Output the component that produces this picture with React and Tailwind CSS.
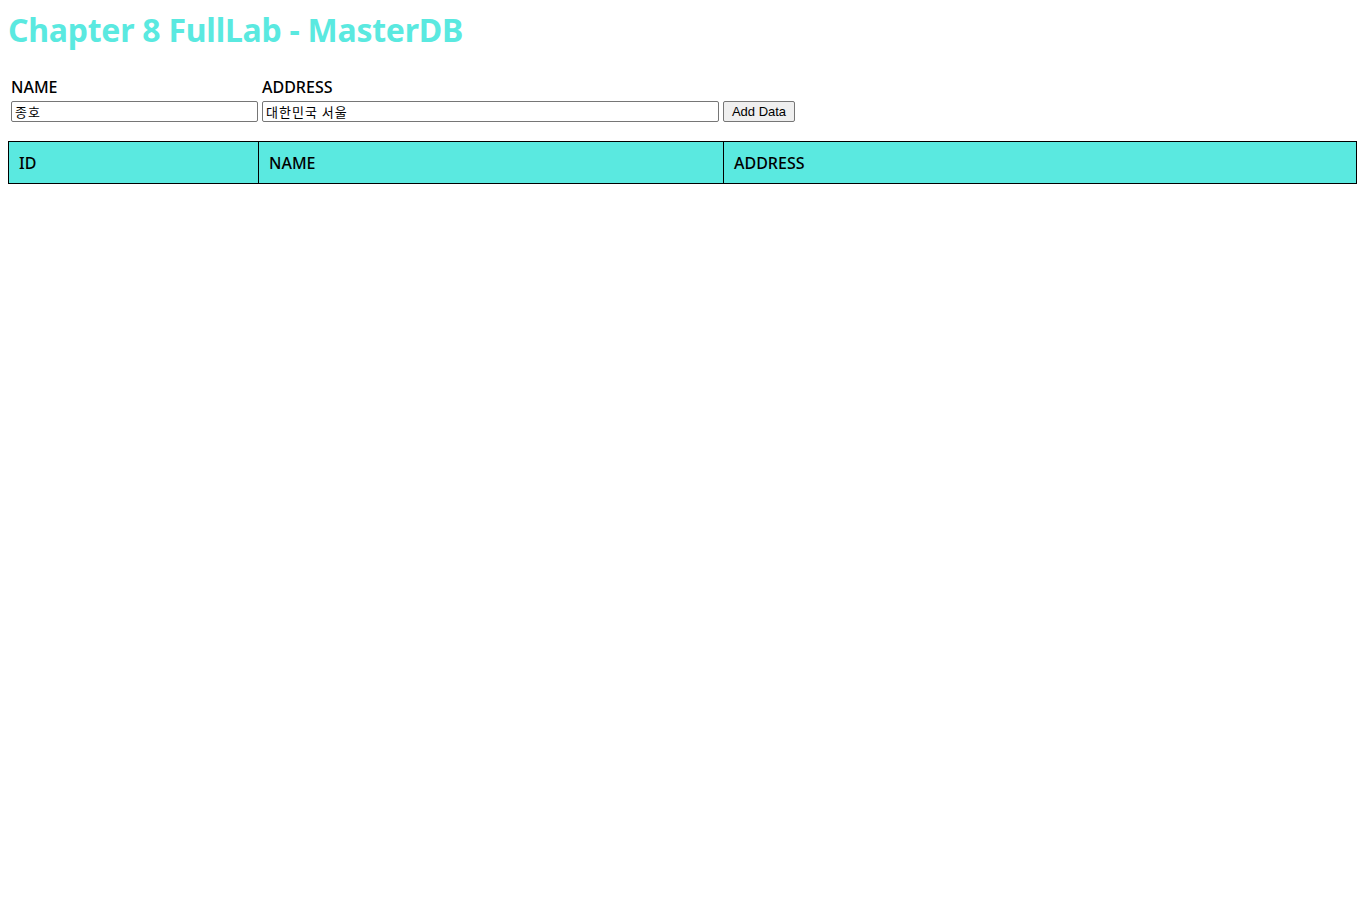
import { useState } from 'react';

const App = () => {
  const [name, setName] = useState('종호');
  const [address, setAddress] = useState('대한민국 서울');
  const [rows, setRows] = useState([]);

  const addData = () => {
    setRows([...rows, { id: rows.length + 1, name, address }]);
  };

  return (
    <div className="min-h-screen bg-white px-2 pt-[9px] font-['Noto_Sans','Noto_Sans_CJK_KR',sans-serif] text-black">
      {/* Title */}
      <h1 className="text-[32px] leading-[42px] font-bold tracking-[-0.25px] text-[#5ae9e0]">
        Chapter 8 FullLab - MasterDB
      </h1>

      {/* Form */}
      <div className="mt-[25px] ml-[3px] flex items-end gap-1">
        <div className="flex w-[247px] flex-col">
          <label className="text-[16px] leading-[22px] font-medium">NAME</label>
          <input
            value={name}
            onChange={(e) => setName(e.target.value)}
            className="mt-[3px] h-[21px] border border-[#767676] rounded-[2px] px-[3px] text-[13px] tracking-[1px] font-['Noto_Sans_CJK_KR',sans-serif] outline-none"
          />
        </div>
        <div className="flex w-[457px] flex-col">
          <label className="text-[16px] leading-[22px] font-medium">ADDRESS</label>
          <input
            value={address}
            onChange={(e) => setAddress(e.target.value)}
            className="mt-[3px] h-[21px] border border-[#767676] rounded-[2px] px-[3px] text-[13px] tracking-[1px] font-['Noto_Sans_CJK_KR',sans-serif] outline-none"
          />
        </div>
        <button
          onClick={addData}
          className="h-[21px] w-[72px] border border-[#767676] rounded-[2px] bg-[#efefef] text-[13px] leading-[19px] font-['Liberation_Sans',sans-serif] hover:bg-[#e5e5e5]"
        >
          Add Data
        </button>
      </div>

      {/* Table */}
      <table className="mt-[19px] w-full border-collapse">
        <thead>
          <tr className="bg-[#5ae9e0] h-[42px]">
            <th className="w-[250px] border border-black px-[10px] text-left text-[16px] font-medium">ID</th>
            <th className="w-[465px] border border-black px-[10px] text-left text-[16px] font-medium">NAME</th>
            <th className="border border-black px-[10px] text-left text-[16px] font-medium">ADDRESS</th>
          </tr>
        </thead>
        <tbody>
          {rows.map((r) => (
            <tr key={r.id}>
              <td className="border border-black px-[10px] py-2">{r.id}</td>
              <td className="border border-black px-[10px] py-2">{r.name}</td>
              <td className="border border-black px-[10px] py-2">{r.address}</td>
            </tr>
          ))}
        </tbody>
      </table>
    </div>
  );
};

export default App;
